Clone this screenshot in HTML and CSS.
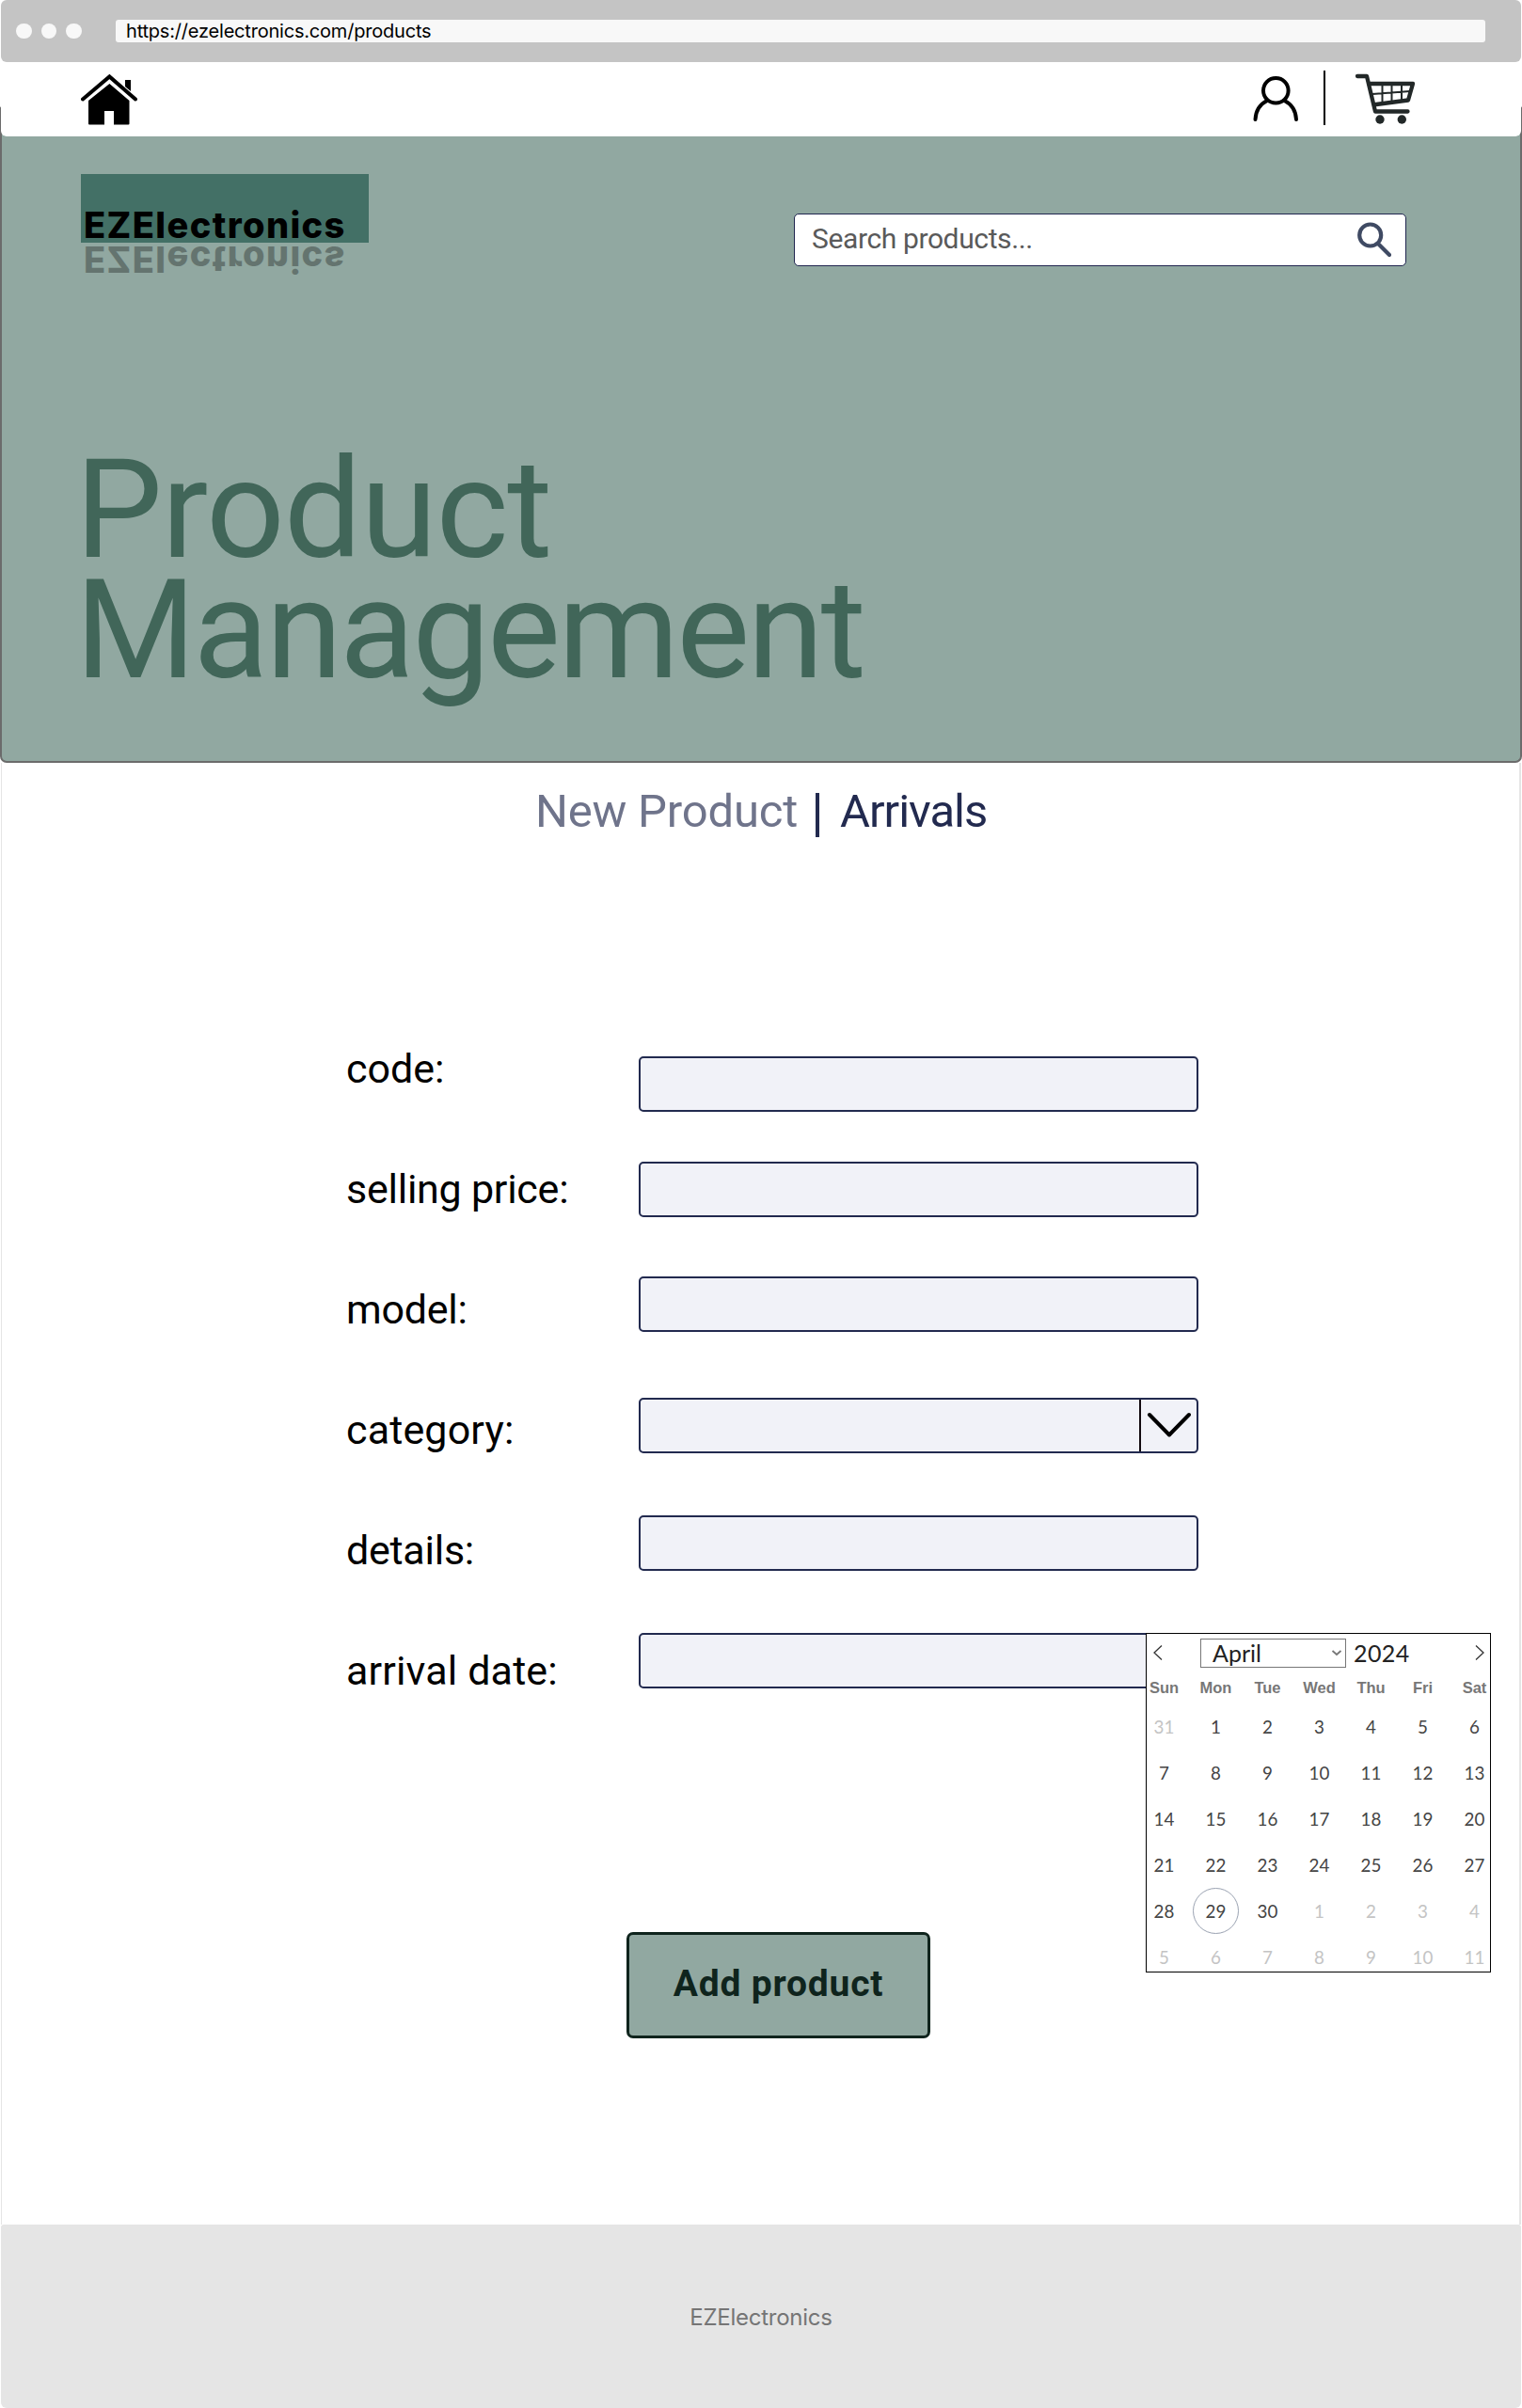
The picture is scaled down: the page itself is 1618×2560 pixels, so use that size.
FILE: index.html
```html
<!DOCTYPE html>
<html lang="en">
<head>
<meta charset="utf-8">
<title>EZElectronics – Product Management</title>
<link rel="stylesheet" href="styles.css">
</head>
<body>
<div class="browser">
  <div class="chrome">
    <div class="dots"><i class="dot"></i><i class="dot"></i><i class="dot"></i></div>
    <div class="address"><span class="url">https://ezelectronics.com/products</span></div>
  </div>

  <header class="header">
    <nav class="nav">
      <svg class="icon-home" width="60" height="56" viewBox="0 0 60 56">
        <path d="M2 28.500 30.400 4.500 58 28.500" fill="none" stroke="#000" stroke-width="4" stroke-linecap="round" stroke-linejoin="miter"/>
        <path d="M47 8h6v12l-6-5z"/>
        <path d="M30.400 12 51.500 30v24.500a1 1 0 0 1-1 1H35V41H25v14.500H9a1 1 0 0 1-1-1V30z"/>
      </svg>
      <div class="nav-right">
        <svg class="icon-user" width="50" height="50" viewBox="0 0 50 50" fill="none" stroke="#000" stroke-width="4" stroke-linecap="round">
          <circle cx="25.300" cy="17.300" r="13.300"/>
          <path d="M3.500 48C4 38.500 9 31.500 16 28M47 48C46.500 38.500 41.500 31.500 34.500 28"/>
        </svg>
        <span class="nav-divider"></span>
        <svg class="icon-cart" width="64" height="56" viewBox="0 0 64 56" fill="none" stroke="#222828" stroke-linecap="round" stroke-linejoin="round">
          <path d="M3 4h10l9 37.500h34.500" stroke-width="4.300"/>
          <path d="M16 12h46l-5 17.500L23 34" stroke-width="4.300"/>
          <path d="M19 23l40-3M29.500 12v21M39.500 12v20M50 12v18" stroke-width="2"/>
          <g fill="#222828" stroke="none"><circle cx="27" cy="50" r="4.700"/><circle cx="50.300" cy="50" r="4.700"/></g>
        </svg>
      </div>
    </nav>

    <div class="masthead">
      <div class="logo">
        <div class="logo-box"><span class="logo-text">EZElectronics</span></div>
        <span class="logo-text logo-mirror" aria-hidden="true">EZElectronics</span>
      </div>
      <div class="search">
        <span class="search-text">Search products...</span>
        <svg width="36" height="38" viewBox="0 0 36 38" fill="none" stroke="#3f4a63" stroke-width="4.200" stroke-linecap="round">
          <circle cx="13.700" cy="14" r="11.500"/>
          <path d="M23 24l11 11"/>
        </svg>
      </div>
    </div>
    <h1 class="title"><span class="title-first">Product</span><br>Management</h1>
  </header>

  <main class="main">
    <div class="tabs">
      <span class="tab tab-new">New Product</span>
      <span class="tab-divider"></span>
      <span class="tab tab-arrivals">Arrivals</span>
    </div>

    <form class="form">
      <div class="row row-code"><label class="label">code:</label><div class="field"></div></div>
      <div class="row row-price"><label class="label">selling price:</label><div class="field"></div></div>
      <div class="row row-model"><label class="label">model:</label><div class="field"></div></div>
      <div class="row row-category"><label class="label">category:</label>
        <div class="field field-select">
          <span class="select-arrow">
            <svg width="50" height="32" viewBox="0 0 50 32" fill="none" stroke="#000" stroke-width="4" stroke-linecap="round" stroke-linejoin="round"><path d="M4 5l21 21.500L46 5"/></svg>
          </span>
        </div>
      </div>
      <div class="row row-details"><label class="label">details:</label><div class="field"></div></div>
      <div class="row row-date"><label class="label">arrival date:</label>
        <div class="field">
          <div class="calendar">
            <div class="cal-head">
              <svg class="cal-prev" width="12" height="18" viewBox="0 0 12 18" fill="none" stroke="#333" stroke-width="1.300"><path d="M10 1.500 2 9l8 7.500"/></svg>
              <div class="cal-month"><span>April</span>
                <svg width="12" height="8" viewBox="0 0 12 8" fill="none" stroke="#777" stroke-width="1.800"><path d="M1.500 2 6 6l4.500-4"/></svg>
              </div>
              <span class="cal-year">2024</span>
              <svg class="cal-next" width="12" height="18" viewBox="0 0 12 18" fill="none" stroke="#333" stroke-width="1.300"><path d="M2 1.500 10 9l-8 7.500"/></svg>
            </div>
            <div class="cal-week"><b>Sun</b><b>Mon</b><b>Tue</b><b>Wed</b><b>Thu</b><b>Fri</b><b>Sat</b></div>
            <div class="cal-days">
              <span class="muted">31</span><span>1</span><span>2</span><span>3</span><span>4</span><span>5</span><span>6</span>
              <span>7</span><span>8</span><span>9</span><span>10</span><span>11</span><span>12</span><span>13</span>
              <span>14</span><span>15</span><span>16</span><span>17</span><span>18</span><span>19</span><span>20</span>
              <span>21</span><span>22</span><span>23</span><span>24</span><span>25</span><span>26</span><span>27</span>
              <span>28</span><span class="today">29</span><span>30</span><span class="muted">1</span><span class="muted">2</span><span class="muted">3</span><span class="muted">4</span>
              <span class="muted">5</span><span class="muted">6</span><span class="muted">7</span><span class="muted">8</span><span class="muted">9</span><span class="muted">10</span><span class="muted">11</span>
            </div>
          </div>
        </div>
      </div>
      <button class="submit" type="button">Add product</button>
    </form>
  </main>

  <footer class="footer">EZElectronics</footer>
</div>
</body>
</html>
```

FILE: styles.css
```css
* { box-sizing: border-box; }
body { margin: 0; background: #fff; font-family: Roboto, "Liberation Sans", sans-serif; }
svg { display: block; flex: none; }

.browser { width: 1618px; height: 2560px; display: flex; flex-direction: column; }

.chrome { height: 66px; margin: 0 1px; padding: 0 38px 0 16px; background: #c4c4c4; border-radius: 6px; display: flex; align-items: center; flex: none; }
.dots { display: flex; gap: 10px; width: 106px; }
.dot { width: 16.500px; height: 16.500px; border-radius: 50%; background: #f8f8f8; }
.address { flex: 1; height: 24px; background: #f8f8f8; border-radius: 3px; padding-left: 11px; }
.url { font: 400 20px/24px Inter, sans-serif; letter-spacing: -0.2px; color: #000; display: block; }

.header { height: 745px; flex: none; background: linear-gradient(#fff 0 60px, #91a8a1 60px); border: 2px solid #6b6b6b; border-top: 0; border-radius: 0 0 7px 7px; }
.nav { height: 79px; margin: 0 -1px; padding: 8px 112px 0 85px; background: #fff; border-radius: 0 0 6px 6px; display: flex; justify-content: space-between; box-shadow: 0 -30px 0 2px #fff; clip-path: inset(0 -1px 0 -1px round 0 0 6px 6px); }
.icon-home { margin-top: 3px; }
.nav-right { display: flex; }
.icon-user { margin-top: 5px; }
.nav-divider { width: 2px; height: 58px; background: #000; margin: 1px 31px 0 26px; }
.icon-cart { margin: 3px 1px 0 0; }

.masthead { display: flex; justify-content: space-between; padding: 40px 121px 0 84px; height: 333px; }
.logo-box { width: 306px; height: 73px; background: #437066; padding: 40px 0 0 3px; }
.logo-text { display: block; font: 800 38px/28px Inter, sans-serif; letter-spacing: 1.4px; white-space: nowrap; color: #000; }
.logo-mirror { transform: scaleY(-1); opacity: .3; margin: 4px 0 0 3px; }
.search { width: 651px; height: 56px; margin-top: 42px; background: #fff; border: 1px solid #20264f; border-radius: 5px; display: flex; justify-content: space-between; align-items: center; padding: 0 15px 0 18px; }
.search-text { font-size: 30px; line-height: 36px; color: #5a5a5a; letter-spacing: -0.38px; margin-top: -2px; }
.title { margin: 0 0 0 78px; font-weight: 400; font-size: 147px; line-height: 128px; color: #416659; letter-spacing: -2.8px; }
.title-first { letter-spacing: -1.1px; }

.main { height: 1554px; flex: none; margin: 0 1px; border: solid #e5e5e5; border-width: 0 2px 0 1px; padding-top: 22px; }
.tabs { height: 60px; display: flex; align-items: center; padding-left: 567px; font-size: 49px; line-height: 62px; }
.tab-new { width: 295px; color: #6f748b; letter-spacing: -0.2px; }
.tab-divider { width: 4px; height: 47px; margin: 6px 22px 0 3px; background: #222a4f; }
.tab-arrivals { color: #222a4f; letter-spacing: -1px; }

.form { padding: 179px 0 0 366px; }
.row { height: 128px; display: flex; }
.label { width: 311px; font-size: 43px; line-height: 128px; color: #000; white-space: nowrap; }
.field { width: 595px; height: 59px; border: 2px solid #222a4f; border-radius: 5px; background: #f1f2f8; position: relative; }
.row-code .field { margin-top: 51px; }
.row-price .field { margin-top: 35px; }
.row-model .field { margin-top: 29px; }
.row-category .field { margin-top: 30px; }
.row-details .field { margin-top: 27px; }
.row-date .field { margin-top: 24px; }
.row-price .label, .row-model .label, .row-details .label { letter-spacing: -0.25px; }
.row-category .label, .row-date .label { letter-spacing: 0.15px; }
.field-select { display: flex; justify-content: flex-end; }
.select-arrow { width: 61px; border-left: 2px solid #120a10; display: flex; align-items: center; justify-content: center; padding: 0 0 2px 1px; }

/* date picker popover, opened over the arrival date field */
.calendar { position: absolute; left: 537px; top: -2px; width: 367px; height: 361px; background: #fff; border: 1px solid #000; font-family: Lato, sans-serif; color: #444; }
.cal-head { height: 42px; display: flex; align-items: center; padding: 0 5px 2px 6px; font-size: 25px; color: #222; }
.cal-month { width: 155px; height: 31px; margin-left: 39px; border: 1px solid #777; display: flex; align-items: center; justify-content: space-between; padding: 0 3px 0 12px; }
.cal-year { margin-left: 8px; flex: 1; letter-spacing: .4px; }
.cal-week, .cal-days { display: grid; grid-template-columns: repeat(7, 55px); margin-left: -9px; text-align: center; }
.cal-week { height: 32px; font: 700 16.500px/31px "Liberation Sans", sans-serif; color: #777; }
.cal-days { grid-auto-rows: 49px; font-size: 18.800px; line-height: 49px; }
.muted { color: #c4c4c4; }
.today { width: 49px; height: 49px; line-height: 47px; justify-self: center; border: 1px solid #9aa2b1; border-radius: 50%; }

.submit { display: block; width: 323px; height: 113px; margin: 214px 0 0 298px; padding: 0 0 3px; border: 3px solid #0f241d; border-radius: 7px; background: #91a8a1; color: #0f241d; font: 700 39px/104px Roboto, sans-serif; letter-spacing: .8px; }

.footer { height: 195px; flex: none; margin: 0 1px; background: #e5e5e5; border-radius: 3px 3px 6px 6px; text-align: center; font: 400 24px/197px Inter, sans-serif; letter-spacing: -0.25px; color: #757575; }
```
